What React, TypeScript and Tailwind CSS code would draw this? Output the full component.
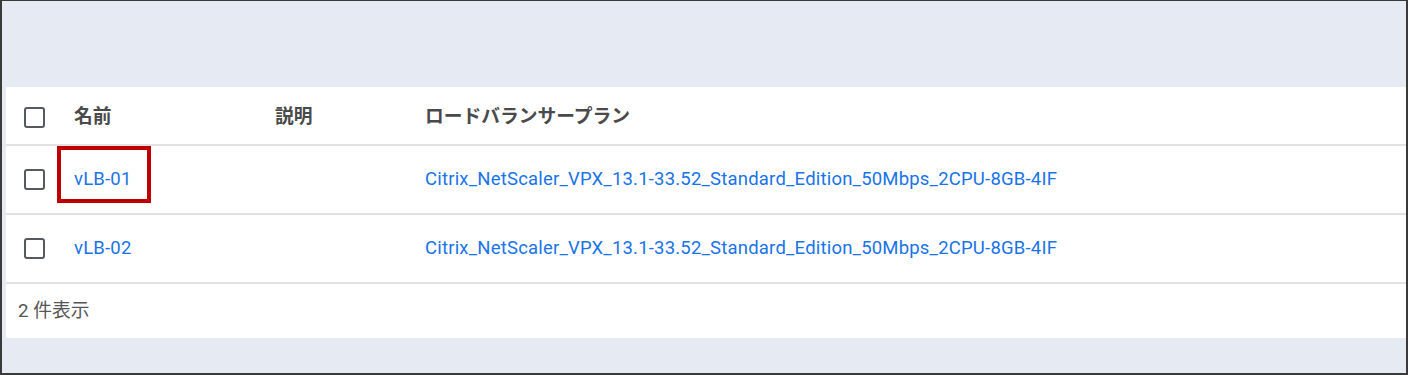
import { useState } from "react";

const font = "font-['Roboto','Noto_Sans_CJK_JP',sans-serif]";

const rows = [
  { id: 1, name: "vLB-01", plan: "Citrix_NetScaler_VPX_13.1-33.52_Standard_Edition_50Mbps_2CPU-8GB-4IF", marked: true },
  { id: 2, name: "vLB-02", plan: "Citrix_NetScaler_VPX_13.1-33.52_Standard_Edition_50Mbps_2CPU-8GB-4IF", marked: false },
];

const Box = () => (
  <span className="block w-[21px] h-[21px] rounded-[3px] border-2 border-[#555a60] bg-white" />
);

export default function App() {
  const [checked] = useState<number[]>([]);

  return (
    <div className={`${font} w-[1408px] h-[375px] bg-[#e6eaf2] border-2 border-t border-[#3a3a3a] flex flex-col`}>
      <div className="h-[86px] shrink-0" />
      <div className="ml-[4px] bg-white flex flex-col">
        {/* header */}
        <div className="grid grid-cols-[68px_201px_150px_1fr] items-center h-[59px] pt-[3px] border-b-2 border-[#e2e2e2] text-[18.75px] font-bold text-[#4a4a4a]">
          <div className="pl-[18px]"><Box /></div>
          <div>名前</div>
          <div>説明</div>
          <div>ロードバランサープラン</div>
        </div>

        {rows.map((r) => (
          <div
            key={r.id}
            className="grid grid-cols-[68px_201px_150px_1fr] items-center h-[69px] border-b-2 border-[#e2e2e2] text-[18.5px] tracking-[0.2px] text-[#1a73e8]"
          >
            <div className="pl-[18px]">{checked.includes(r.id) ? <Box /> : <Box />}</div>
            <div className="relative self-stretch flex items-center">
              <a>{r.name}</a>
              {r.marked && (
                <span className="absolute left-[-17px] top-0 w-[94px] h-[57px] border-4 border-[#c00000]" />
              )}
            </div>
            <div />
            <a>{r.plan}</a>
          </div>
        ))}

        <div className="h-[54px] flex items-center pl-[12px] pt-[1px] text-[18.75px] text-[#555]">2 件表示</div>
      </div>
    </div>
  );
}
